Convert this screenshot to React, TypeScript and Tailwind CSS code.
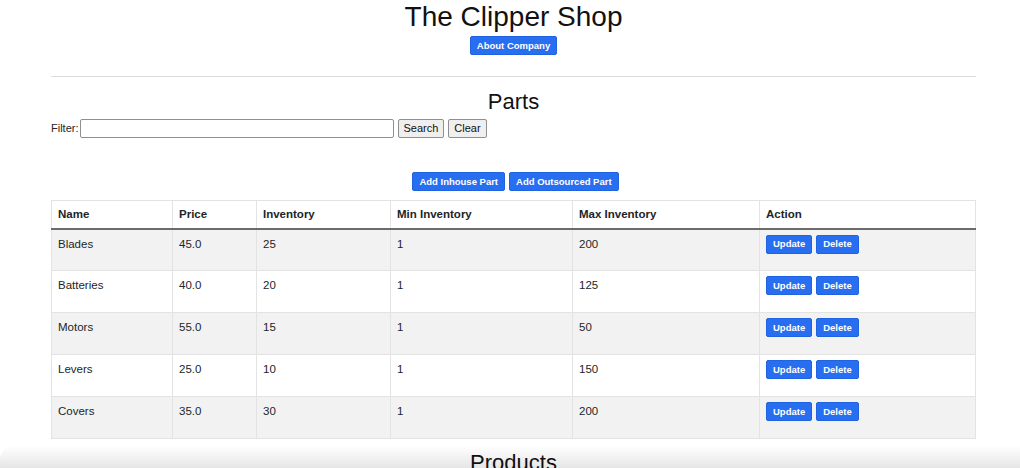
const parts = [
  { name: "Blades", price: "45.0", inv: 25, min: 1, max: 200 },
  { name: "Batteries", price: "40.0", inv: 20, min: 1, max: 125 },
  { name: "Motors", price: "55.0", inv: 15, min: 1, max: 50 },
  { name: "Levers", price: "25.0", inv: 10, min: 1, max: 150 },
  { name: "Covers", price: "35.0", inv: 30, min: 1, max: 200 },
]

function BlueButton({ label }: { label: string }) {
  return (
    <button className="h-[19px] px-[6px] bg-[#276ef1] text-white text-[9.5px] font-bold rounded-[2px] border border-[#1f63e0] leading-none">
      {label}
    </button>
  )
}

function GrayButton({ label }: { label: string }) {
  return (
    <button className="h-[19px] px-[5px] bg-[#efefef] text-[#111] text-[11px] border border-[#8f8f8f] rounded-[2px] leading-none">
      {label}
    </button>
  )
}

export default function App() {
  return (
    <div className="relative h-[468px] overflow-hidden bg-white text-[#212529] font-['Liberation_Sans',Arial,sans-serif]">
      <div className="ml-[51px] w-[925px]">
        <h1 className="text-center text-[28px] leading-[34px] text-[#111]">The Clipper Shop</h1>
        <div className="flex justify-center mt-[2px]">
          <BlueButton label="About Company" />
        </div>
        <hr className="mt-[21px] border-t border-[#dcdcdc]" />
        <h2 className="text-center text-[22px] leading-[26px] mt-[12px] text-[#111]">Parts</h2>
        <div className="flex items-center gap-[4px] mt-[4px] text-[11px]">
          <span>Filter:</span>
          <input className="-ml-[3px] w-[314px] h-[19px] border border-[#8f8f8f] rounded-[2px] bg-white" />
          <GrayButton label="Search" />
          <GrayButton label="Clear" />
        </div>
        <div className="flex justify-center gap-[4px] mt-[34px] ml-[4px]">
          <BlueButton label="Add Inhouse Part" />
          <BlueButton label="Add Outsourced Part" />
        </div>
        <table className="mt-[9px] w-full border-collapse text-[11.5px] border border-[#e3e3e3]">
          <thead>
            <tr className="h-[28px] border-b-2 border-[#6b6b6b] text-left">
              <th className="w-[121px] px-[6px] font-bold">Name</th>
              <th className="w-[84px] px-[6px] font-bold border-l border-[#e3e3e3]">Price</th>
              <th className="w-[134px] px-[6px] font-bold border-l border-[#e3e3e3]">Inventory</th>
              <th className="w-[182px] px-[6px] font-bold border-l border-[#e3e3e3]">Min Inventory</th>
              <th className="w-[187px] px-[6px] font-bold border-l border-[#e3e3e3]">Max Inventory</th>
              <th className="px-[6px] font-bold border-l border-[#e3e3e3]">Action</th>
            </tr>
          </thead>
          <tbody>
            {parts.map((p, i) => (
              <tr key={p.name} className={`h-[42px] align-top border-t border-[#e3e3e3] ${i % 2 === 0 ? "bg-[#f2f2f2]" : "bg-white"}`}>
                <td className="px-[6px] pt-[6px]">{p.name}</td>
                <td className="px-[6px] pt-[6px] border-l border-[#e3e3e3]">{p.price}</td>
                <td className="px-[6px] pt-[6px] border-l border-[#e3e3e3]">{p.inv}</td>
                <td className="px-[6px] pt-[6px] border-l border-[#e3e3e3]">{p.min}</td>
                <td className="px-[6px] pt-[6px] border-l border-[#e3e3e3]">{p.max}</td>
                <td className="px-[6px] pt-[5px] border-l border-[#e3e3e3]">
                  <div className="flex gap-[4px]">
                    <BlueButton label="Update" />
                    <BlueButton label="Delete" />
                  </div>
                </td>
              </tr>
            ))}
          </tbody>
        </table>
        <h2 className="text-center text-[22px] leading-[26px] mt-[11px] text-[#111]">Products</h2>
      </div>
      <div className="pointer-events-none absolute left-0 right-0 bottom-0 h-[22px] rounded-tl-[14px] bg-gradient-to-b from-transparent to-black/10" />
    </div>
  )
}
